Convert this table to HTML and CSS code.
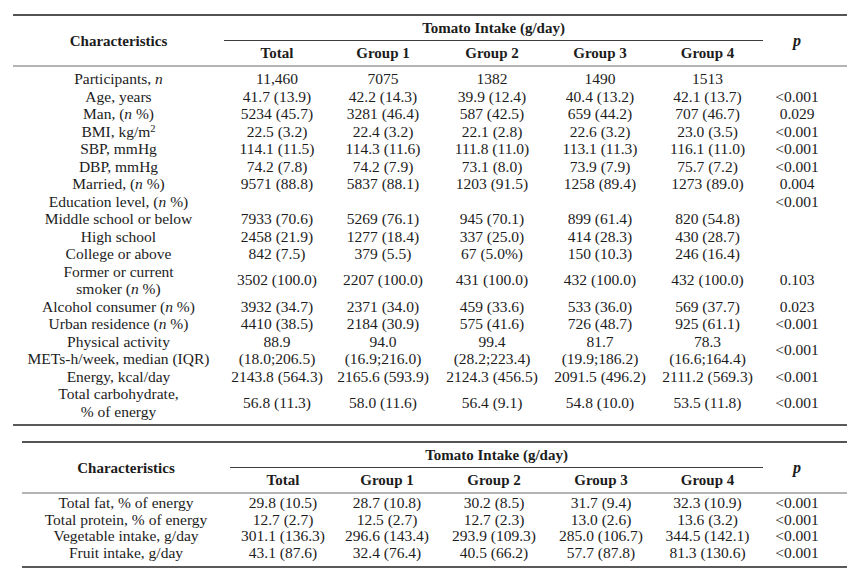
FILE: index.html
```html
<!DOCTYPE html>
<html lang="en">
<head>
<meta charset="utf-8">
<title>Tomato Intake Characteristics</title>
<link rel="stylesheet" href="styles.css">
</head>
<body>
<div class="page">
<table class="tbl tbl-a">
  <colgroup>
    <col class="c-char"><col class="c-total"><col class="c-g1"><col class="c-g2"><col class="c-g3"><col class="c-g4"><col class="c-p">
  </colgroup>
  <thead>
    <tr>
      <th rowspan="2" class="h-char">Characteristics</th>
      <th colspan="5" class="h-span">Tomato Intake (g/day)</th>
      <th rowspan="2" class="h-p"><i>p</i></th>
    </tr>
    <tr>
      <th class="h-grp">Total</th>
      <th class="h-grp">Group 1</th>
      <th class="h-grp">Group 2</th>
      <th class="h-grp">Group 3</th>
      <th class="h-grp">Group 4</th>
    </tr>
  </thead>
  <tbody>
    <tr><td>Participants, <i>n</i></td><td>11,460</td><td>7075</td><td>1382</td><td>1490</td><td>1513</td><td class="pv"></td></tr>
    <tr><td>Age, years</td><td>41.7 (13.9)</td><td>42.2 (14.3)</td><td>39.9 (12.4)</td><td>40.4 (13.2)</td><td>42.1 (13.7)</td><td class="pv">&lt;0.001</td></tr>
    <tr><td>Man, (<i>n</i> %)</td><td>5234 (45.7)</td><td>3281 (46.4)</td><td>587 (42.5)</td><td>659 (44.2)</td><td>707 (46.7)</td><td class="pv">0.029</td></tr>
    <tr><td>BMI, kg/m<sup>2</sup></td><td>22.5 (3.2)</td><td>22.4 (3.2)</td><td>22.1 (2.8)</td><td>22.6 (3.2)</td><td>23.0 (3.5)</td><td class="pv">&lt;0.001</td></tr>
    <tr><td>SBP, mmHg</td><td>114.1 (11.5)</td><td>114.3 (11.6)</td><td>111.8 (11.0)</td><td>113.1 (11.3)</td><td>116.1 (11.0)</td><td class="pv">&lt;0.001</td></tr>
    <tr><td>DBP, mmHg</td><td>74.2 (7.8)</td><td>74.2 (7.9)</td><td>73.1 (8.0)</td><td>73.9 (7.9)</td><td>75.7 (7.2)</td><td class="pv">&lt;0.001</td></tr>
    <tr><td>Married, (<i>n</i> %)</td><td>9571 (88.8)</td><td>5837 (88.1)</td><td>1203 (91.5)</td><td>1258 (89.4)</td><td>1273 (89.0)</td><td class="pv">0.004</td></tr>
    <tr><td>Education level, (<i>n</i> %)</td><td></td><td></td><td></td><td></td><td></td><td class="pv">&lt;0.001</td></tr>
    <tr><td>Middle school or below</td><td>7933 (70.6)</td><td>5269 (76.1)</td><td>945 (70.1)</td><td>899 (61.4)</td><td>820 (54.8)</td><td class="pv"></td></tr>
    <tr><td>High school</td><td>2458 (21.9)</td><td>1277 (18.4)</td><td>337 (25.0)</td><td>414 (28.3)</td><td>430 (28.7)</td><td class="pv"></td></tr>
    <tr><td>College or above</td><td>842 (7.5)</td><td>379 (5.5)</td><td>67 (5.0%)</td><td>150 (10.3)</td><td>246 (16.4)</td><td class="pv"></td></tr>
    <tr><td>Former or current<br>smoker (<i>n</i> %)</td><td>3502 (100.0)</td><td>2207 (100.0)</td><td>431 (100.0)</td><td>432 (100.0)</td><td>432 (100.0)</td><td class="pv">0.103</td></tr>
    <tr><td>Alcohol consumer (<i>n</i> %)</td><td>3932 (34.7)</td><td>2371 (34.0)</td><td>459 (33.6)</td><td>533 (36.0)</td><td>569 (37.7)</td><td class="pv">0.023</td></tr>
    <tr><td>Urban residence (<i>n</i> %)</td><td>4410 (38.5)</td><td>2184 (30.9)</td><td>575 (41.6)</td><td>726 (48.7)</td><td>925 (61.1)</td><td class="pv">&lt;0.001</td></tr>
    <tr><td>Physical activity<br>METs-h/week, median (IQR)</td><td>88.9<br>(18.0;206.5)</td><td>94.0<br>(16.9;216.0)</td><td>99.4<br>(28.2;223.4)</td><td>81.7<br>(19.9;186.2)</td><td>78.3<br>(16.6;164.4)</td><td class="pv">&lt;0.001</td></tr>
    <tr><td>Energy, kcal/day</td><td>2143.8 (564.3)</td><td>2165.6 (593.9)</td><td>2124.3 (456.5)</td><td>2091.5 (496.2)</td><td>2111.2 (569.3)</td><td class="pv">&lt;0.001</td></tr>
    <tr><td>Total carbohydrate,<br>% of energy</td><td>56.8 (11.3)</td><td>58.0 (11.6)</td><td>56.4 (9.1)</td><td>54.8 (10.0)</td><td>53.5 (11.8)</td><td class="pv">&lt;0.001</td></tr>
  </tbody>
</table>

<table class="tbl tbl-b">
  <colgroup>
    <col class="c-char"><col class="c-total"><col class="c-g1"><col class="c-g2"><col class="c-g3"><col class="c-g4"><col class="c-p">
  </colgroup>
  <thead>
    <tr>
      <th rowspan="2" class="h-char">Characteristics</th>
      <th colspan="5" class="h-span">Tomato Intake (g/day)</th>
      <th rowspan="2" class="h-p"><i>p</i></th>
    </tr>
    <tr>
      <th class="h-grp">Total</th>
      <th class="h-grp">Group 1</th>
      <th class="h-grp">Group 2</th>
      <th class="h-grp">Group 3</th>
      <th class="h-grp">Group 4</th>
    </tr>
  </thead>
  <tbody>
    <tr><td>Total fat, % of energy</td><td>29.8 (10.5)</td><td>28.7 (10.8)</td><td>30.2 (8.5)</td><td>31.7 (9.4)</td><td>32.3 (10.9)</td><td class="pv">&lt;0.001</td></tr>
    <tr><td>Total protein, % of energy</td><td>12.7 (2.7)</td><td>12.5 (2.7)</td><td>12.7 (2.3)</td><td>13.0 (2.6)</td><td>13.6 (3.2)</td><td class="pv">&lt;0.001</td></tr>
    <tr><td>Vegetable intake, g/day</td><td>301.1 (136.3)</td><td>296.6 (143.4)</td><td>293.9 (109.3)</td><td>285.0 (106.7)</td><td>344.5 (142.1)</td><td class="pv">&lt;0.001</td></tr>
    <tr><td>Fruit intake, g/day</td><td>43.1 (87.6)</td><td>32.4 (76.4)</td><td>40.5 (66.2)</td><td>57.7 (87.8)</td><td>81.3 (130.6)</td><td class="pv">&lt;0.001</td></tr>
  </tbody>
</table>
</div>
</body>
</html>
```

FILE: styles.css
```css
html, body {
  margin: 0;
  padding: 0;
  background: #ffffff;
}

.page {
  width: 859px;
  height: 577px;
  overflow: hidden;
  padding-top: 14px;
  box-sizing: border-box;
  font-family: "Liberation Serif", "Times New Roman", serif;
  color: #1c1c1c;
}

.tbl {
  border-collapse: separate;
  border-spacing: 0;
  table-layout: fixed;
  font-size: 15.5px;
  line-height: 17.5px;
}

.tbl-a {
  width: 834px;
  margin-left: 13px;
}

.tbl-b {
  width: 825px;
  margin-left: 22px;
  margin-top: 15px;
}

.tbl-a .c-char { width: 211px; }
.tbl-b .c-char { width: 208px; }
.c-total { width: 106px; }
.tbl-a .c-g1 { width: 106px; }
.tbl-b .c-g1 { width: 102px; }
.c-g2 { width: 112px; }
.tbl-a .c-g3 { width: 104px; }
.tbl-b .c-g3 { width: 102px; }
.c-g4 { width: 111px; }
.c-p { width: 84px; }

th, td {
  padding: 0;
  text-align: center;
  vertical-align: middle;
  white-space: nowrap;
}

th {
  font-weight: bold;
  font-size: 15px;
  line-height: 24px;
}

thead tr:first-child th {
  border-top: 2px solid #545454;
}

.h-char,
.h-p,
.h-grp {
  border-bottom: 2px solid #b4b4b4;
}

.h-span {
  border-bottom: 1px solid #3c3c3c;
}

.h-p,
.pv {
  padding-right: 16px;
}

.h-p i {
  font-size: 16px;
}

tbody tr:first-child td {
  padding-top: 3px;
}

tbody tr:last-child td {
  padding-bottom: 4px;
  border-bottom: 2px solid #5a5a5a;
}

.tbl-b tbody {
  line-height: 16.5px;
}

.tbl-b tbody tr:first-child td {
  padding-top: 1px;
}

.tbl-b tbody tr:last-child td {
  padding-bottom: 5px;
}

sup {
  font-size: 0.68em;
  line-height: 0;
  vertical-align: 0.45em;
}
```
